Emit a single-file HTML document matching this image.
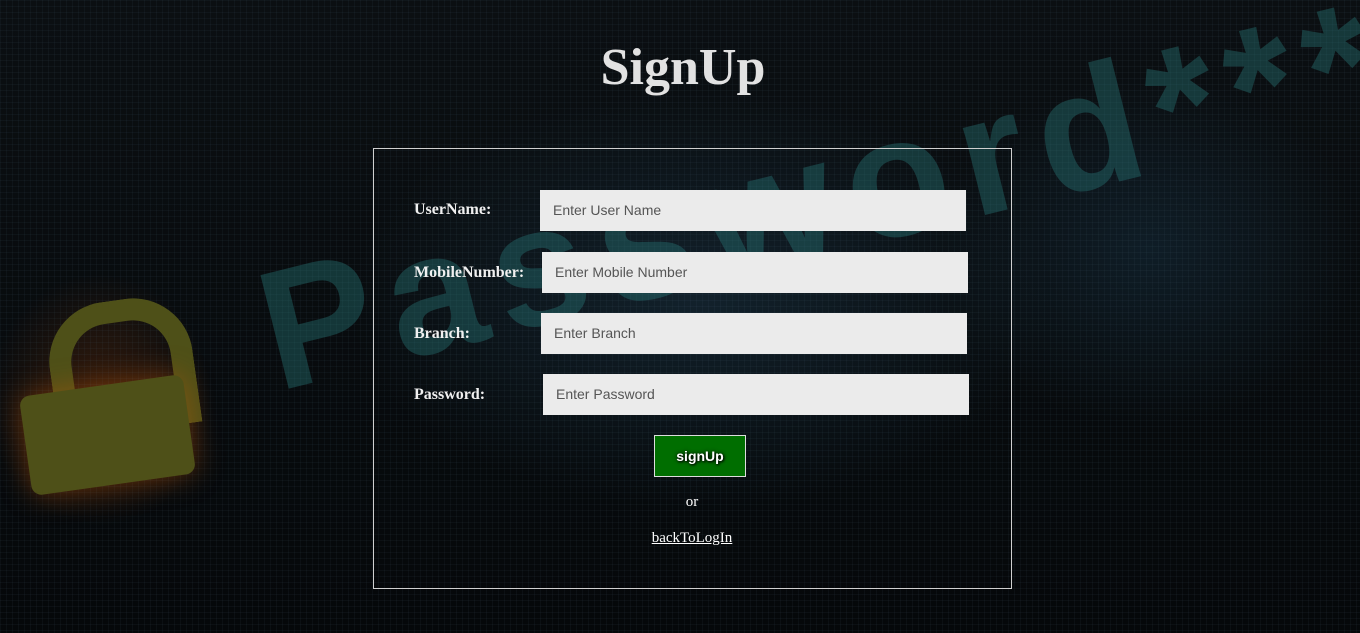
<!DOCTYPE html>
<html><head><style>
html,body{margin:0;padding:0;width:1360px;height:633px;overflow:hidden;background:#07090b;font-family:"Liberation Serif",serif;}
.bg{position:absolute;inset:0;background:
radial-gradient(ellipse 500px 300px at 700px 300px,rgba(30,60,80,.45),transparent 70%),
radial-gradient(ellipse 300px 250px at 1150px 250px,rgba(25,55,75,.4),transparent 70%),
radial-gradient(ellipse 160px 180px at 100px 400px,rgba(140,60,10,.35),transparent 70%),
linear-gradient(180deg,#0b0f12,#05080a);}
.grid{position:absolute;inset:0;background-image:linear-gradient(rgba(80,110,130,.08) 1px,transparent 1px),linear-gradient(90deg,rgba(80,110,130,.08) 1px,transparent 1px);background-size:6px 6px;}
.pw{position:absolute;left:240px;top:240px;font:bold 170px "Liberation Sans",sans-serif;color:rgba(40,120,120,.4);transform:rotate(-14deg);transform-origin:left top;letter-spacing:14px;white-space:nowrap;}
.lock{position:absolute;left:25px;top:385px;width:165px;height:100px;background:#4e5018;border-radius:10px;transform:rotate(-8deg);box-shadow:0 0 30px rgba(200,90,10,.45);}
.shackle{position:absolute;left:50px;top:300px;width:100px;height:110px;border:22px solid #4e5018;border-bottom:none;border-radius:60px 60px 0 0;transform:rotate(-8deg);}
h1{position:absolute;left:0;width:1366px;top:38px;margin:0;text-align:center;font-size:52px;font-weight:bold;color:#e2e2e2;}
.box{position:absolute;left:373px;top:148px;width:637px;height:439px;border:1px solid #d0d0d0;}
.lbl{position:absolute;left:414px;color:#f0f0f0;font-weight:bold;font-size:16px;}
.in{position:absolute;height:41px;width:426px;background:#ebebeb;box-sizing:border-box;padding-left:13px;font:14px "Liberation Sans",sans-serif;line-height:41px;color:#555;}
.btn{position:absolute;left:654px;top:435px;width:90px;height:40px;background:#006e00;border:1px solid #ddd;color:#fff;font:bold 14px "Liberation Sans",sans-serif;line-height:40px;text-align:center;text-shadow:0 0 4px #000,1px 1px 2px #000;}
.t{position:absolute;left:0;width:1384px;text-align:center;color:#fff;font-size:15px;}
</style></head><body>
<div class="bg"></div><div class="grid"></div>
<div class="pw">Password***</div>
<div class="shackle"></div><div class="lock"></div>
<h1>SignUp</h1>
<div class="box"></div>
<div class="lbl" style="top:201px">UserName:</div>
<div class="in" style="left:540px;top:190px">Enter User Name</div>
<div class="lbl" style="top:264px">MobileNumber:</div>
<div class="in" style="left:542px;top:252px">Enter Mobile Number</div>
<div class="lbl" style="top:325px">Branch:</div>
<div class="in" style="left:541px;top:313px">Enter Branch</div>
<div class="lbl" style="top:386px">Password:</div>
<div class="in" style="left:543px;top:374px">Enter Password</div>
<div class="btn">signUp</div>
<div class="t" style="top:494px">or</div>
<div class="t" style="top:530px;text-decoration:underline">backToLogIn</div>
</body></html>
